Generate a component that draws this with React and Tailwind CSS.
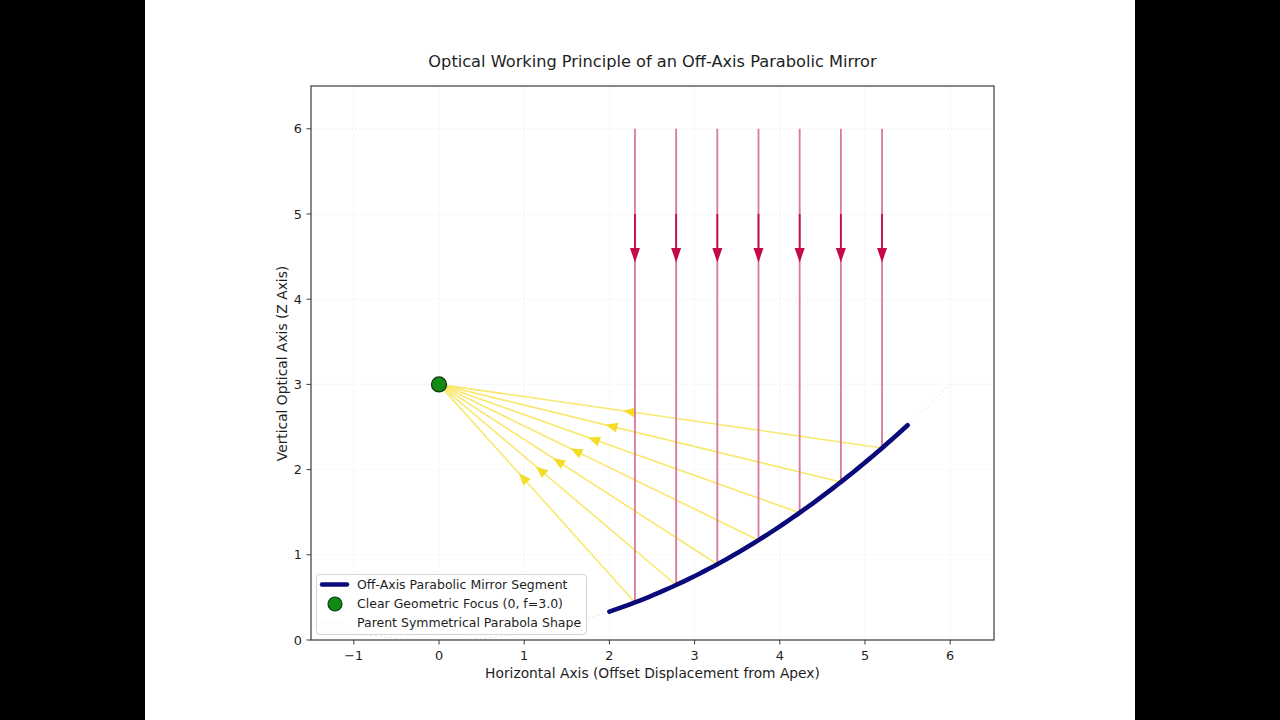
import React from "react";

const X = (x) => 439 + 85.2 * x;
const Y = (z) => 640 - 85.2 * z;

const rayXs = Array.from({ length: 7 }, (_, i) => 2.3 + (i * 2.9) / 6);

function mirrorPath(a, b, n = 60) {
  const pts = [];
  for (let i = 0; i <= n; i++) {
    const x = a + ((b - a) * i) / n;
    pts.push(`${X(x).toFixed(2)},${Y((x * x) / 12).toFixed(2)}`);
  }
  return "M" + pts.join(" L");
}

function yellowArrow(x) {
  const mx = X(x);
  const my = Y((x * x) / 12);
  const fx = X(0);
  const fy = Y(3);
  const dx = fx - mx;
  const dy = fy - my;
  const len = Math.hypot(dx, dy);
  const ux = dx / len;
  const uy = dy / len;
  const cx = mx + dx * 0.57;
  const cy = my + dy * 0.57;
  const tipx = cx + ux * 6.5;
  const tipy = cy + uy * 6.5;
  const bx = cx - ux * 5.5;
  const by = cy - uy * 5.5;
  const px = -uy * 5;
  const py = ux * 5;
  return `${tipx},${tipy} ${bx + px},${by + py} ${bx - px},${by - py}`;
}

export default function App() {
  const xticks = [-1, 0, 1, 2, 3, 4, 5, 6];
  const yticks = [0, 1, 2, 3, 4, 5, 6];
  return (
    <div className="w-[1280px] h-[720px] bg-black flex justify-center font-['DejaVu_Sans',sans-serif]">
      <div className="w-[990px] h-full bg-white">
        <svg width="990" height="720" viewBox="145 0 990 720" className="block">
          {/* grid */}
          {xticks.map((t) => (
            <line key={"gx" + t} x1={X(t)} x2={X(t)} y1={86} y2={640} stroke="#eeeeee" strokeWidth="0.8" strokeDasharray="2 2" />
          ))}
          {yticks.map((t) => (
            <line key={"gy" + t} x1={311} x2={994} y1={Y(t)} y2={Y(t)} stroke="#eeeeee" strokeWidth="0.8" strokeDasharray="2 2" />
          ))}

          {/* parent parabola (faint) */}
          <path d={mirrorPath(-1.5, 6, 120)} fill="none" stroke="#e4e4e4" strokeWidth="1" strokeDasharray="2 3" />

          {/* yellow reflected rays */}
          {rayXs.map((x) => (
            <line key={"yl" + x} x1={X(x)} y1={Y((x * x) / 12)} x2={X(0)} y2={Y(3)} stroke="#f8e86e" strokeWidth="1.6" />
          ))}
          {rayXs.map((x) => (
            <polygon key={"ya" + x} points={yellowArrow(x)} fill="#f4dc2a" />
          ))}

          {/* incoming red rays */}
          {rayXs.map((x) => (
            <g key={"r" + x}>
              <line x1={X(x)} x2={X(x)} y1={Y(6)} y2={Y((x * x) / 12)} stroke="#d9779f" strokeWidth="1.8" />
              <line x1={X(x)} x2={X(x)} y1={Y(5)} y2={Y(4.6)} stroke="#c40c4c" strokeWidth="1.8" />
              <polygon
                points={`${X(x)},${Y(4.43)} ${X(x) - 5},${Y(4.6)} ${X(x) + 5},${Y(4.6)}`}
                fill="#c40a4a"
              />
            </g>
          ))}

          {/* mirror */}
          <path d={mirrorPath(2, 5.5)} fill="none" stroke="#0a0a7a" strokeWidth="4.6" strokeLinecap="round" />

          {/* focus */}
          <circle cx={X(0)} cy={Y(3)} r="7.5" fill="#138a13" stroke="#0b3b0b" strokeWidth="1.3" />

          {/* axes frame */}
          <rect x="311" y="86" width="683" height="554" fill="none" stroke="#3a3a3a" strokeWidth="1.2" />

          {/* ticks */}
          {xticks.map((t) => (
            <g key={"tx" + t}>
              <line x1={X(t)} x2={X(t)} y1={640} y2={644.5} stroke="#3a3a3a" strokeWidth="1" />
              <text x={X(t)} y={660} fontSize="12.8" fill="#1e1e1e" textAnchor="middle">
                {t < 0 ? "\u2212" + Math.abs(t) : t}
              </text>
            </g>
          ))}
          {yticks.map((t) => (
            <g key={"ty" + t}>
              <line x1={306.5} x2={311} y1={Y(t)} y2={Y(t)} stroke="#3a3a3a" strokeWidth="1" />
              <text x={302} y={Y(t) + 4.6} fontSize="12.8" fill="#1e1e1e" textAnchor="end">
                {t}
              </text>
            </g>
          ))}

          {/* labels */}
          <text x="652.5" y="67" fontSize="16.2" fill="#1e1e1e" textAnchor="middle">
            Optical Working Principle of an Off-Axis Parabolic Mirror
          </text>
          <text x="652.5" y="677.5" fontSize="13.8" fill="#1e1e1e" textAnchor="middle">
            Horizontal Axis (Offset Displacement from Apex)
          </text>
          <text x="0" y="0" fontSize="13.8" fill="#1e1e1e" textAnchor="middle" transform="translate(287 363.5) rotate(-90)">
            Vertical Optical Axis (Z Axis)
          </text>

          {/* legend */}
          <rect x="316.5" y="574.5" width="270" height="60" rx="3" fill="#ffffff" fillOpacity="0.85" stroke="#d4d4d4" strokeWidth="1" />
          <line x1="322" x2="347" y1="584.5" y2="584.5" stroke="#0a0a7a" strokeWidth="4.5" strokeLinecap="round" />
          <circle cx="335" cy="604" r="7" fill="#138a13" stroke="#0b3b0b" strokeWidth="1.2" />
          <line x1="322" x2="347" y1="622.5" y2="622.5" stroke="#f0f0f0" strokeWidth="1" strokeDasharray="2 3" />
          <text x="357" y="589" fontSize="12.5" fill="#1e1e1e">Off-Axis Parabolic Mirror Segment</text>
          <text x="357" y="608" fontSize="12.5" fill="#1e1e1e">Clear Geometric Focus (0, f=3.0)</text>
          <text x="357" y="627" fontSize="12.5" fill="#1e1e1e">Parent Symmetrical Parabola Shape</text>
        </svg>
      </div>
    </div>
  );
}
